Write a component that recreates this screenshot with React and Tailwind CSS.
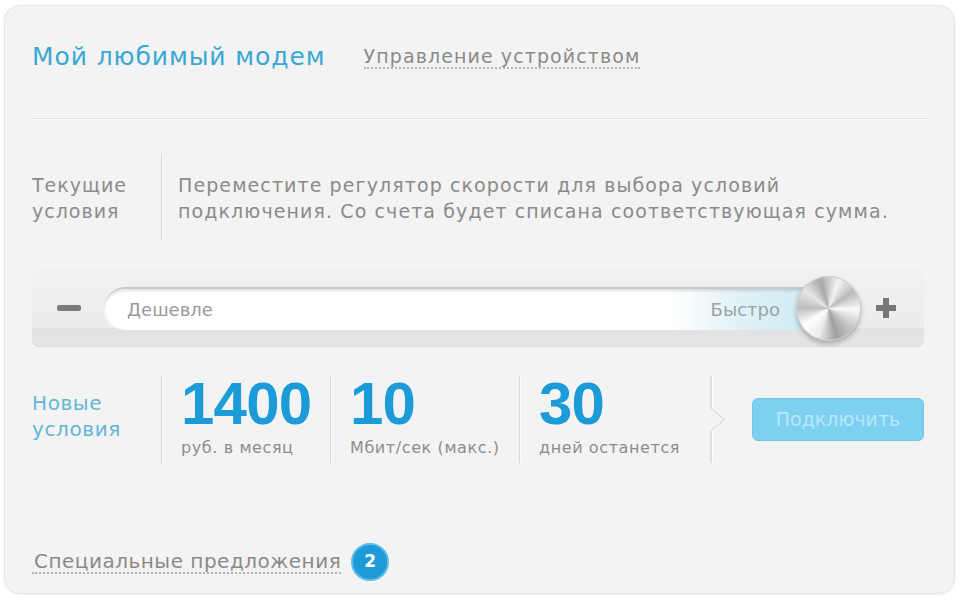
import React from 'react'

const verdana = "font-['DejaVu_Sans',Verdana,sans-serif]"
const tahoma = "font-['DejaVu_Sans',Tahoma,sans-serif]"

function Divider() {
  return <div className="h-full w-[2px] border-l border-[#d9d9d9] bg-[#fbfbfb]" />
}

function Stat({ value, label, width }) {
  return (
    <div className={`flex h-full items-stretch ${width}`}>
      <Divider />
      <div className="-mt-[2px] flex flex-col pl-[18px]">
        <span className="font-['Liberation_Sans',Arial,sans-serif] text-[60px] font-bold leading-[60px] tracking-[-0.8px] text-[#1b9bd7]">
          {value}
        </span>
        <span className={`${verdana} mt-[5px] text-[16px] leading-[18px] tracking-[0.6px] text-[#8d8d8d]`}>{label}</span>
      </div>
    </div>
  )
}

function Knob() {
  return (
    <div className="relative z-10 -ml-[34px] h-[65px] w-[65px] shrink-0 rounded-full bg-[#cfcfcf] p-[1px] shadow-[0_3px_5px_rgba(0,0,0,0.25)]">
      <div className="h-full w-full rounded-full bg-[conic-gradient(from_20deg,#f4f4f4,#b9b9b9,#fafafa,#c8c8c8,#9f9f9f,#ececec,#ffffff,#bdbdbd,#e6e6e6,#a9a9a9,#f4f4f4)]" />
    </div>
  )
}

function App() {
  return (
    <div className="h-[600px] w-[975px] overflow-hidden bg-white pl-[4px] pt-[5px]">
      <div className="flex h-[589px] w-[951px] flex-col rounded-[16px] border border-[#e4e4e4] bg-[#f3f3f3] pl-[27px] pr-[26px] shadow-[0_1px_3px_rgba(0,0,0,0.06)]">
        {/* header */}
        <div className="flex h-[102px] items-center gap-[38px]">
          <h1 className={`${tahoma} text-[25px] leading-[30px] tracking-[0.9px] text-[#3aa8d4]`}>Мой любимый модем</h1>
          <span className={`${tahoma} border-b-2 border-dotted border-[#b5b5b5] text-[19px] leading-[22px] tracking-[1.1px] text-[#8a8a8a]`}>
            Управление устройством
          </span>
        </div>
        <div className="mt-[10px] h-[2px] border-t border-[#e2e2e2] bg-white/70" />

        {/* current conditions */}
        <div className="mt-[34px] flex h-[87px] items-stretch">
          <div className={`${tahoma} flex w-[129px] items-center text-[19px] leading-[26px] tracking-[1px] text-[#8c8c8c]`}>
            Текущие
            <br />
            условия
          </div>
          <Divider />
          <p className={`${tahoma} flex items-center pl-[15px] text-[19px] leading-[26px] tracking-[1.1px] text-[#8a8a8a]`}>
            Переместите регулятор скорости для выбора условий
            <br />
            подключения. Со счета будет списана соответствующая сумма.
          </p>
        </div>

        {/* slider */}
        <div className="mt-[28px] flex h-[78px] w-[892px] items-center rounded-[8px] bg-[linear-gradient(#f1f1f1_0%,#ececec_75%,#e2e2e2_76%,#e4e4e4_100%)] pl-[25px] pr-[18px] shadow-[inset_0_-1px_0_#dadada]">
          <div className="h-[6px] w-[24px] rounded-[2px] bg-[#7a7a7a]" />
          <div className="ml-[23px] flex h-[43px] w-[726px] items-center justify-between rounded-full border-t-2 border-[#c9c9c9] bg-[linear-gradient(90deg,#ffffff_0%,#ffffff_78%,#dff1f6_88%,#c9eaf3_100%)] pl-[23px] pr-[50px] shadow-[inset_0_2px_3px_rgba(0,0,0,0.12)]">
            <span className={`${verdana} text-[18px] text-[#9b9b9b]`}>Дешевле</span>
            <span className={`${verdana} text-[18px] text-[#9aa3a6]`}>Быстро</span>
          </div>
          <Knob />
          <div className="relative ml-[15px] h-[20px] w-[20px]">
            <div className="absolute left-0 top-[7px] h-[6px] w-[20px] bg-[#777]" />
            <div className="absolute left-[7px] top-0 h-[20px] w-[6px] bg-[#777]" />
          </div>
        </div>

        {/* new conditions */}
        <div className="mt-[29px] flex h-[87px] items-stretch">
          <div className={`${verdana} flex w-[129px] items-center pb-[8px] text-[20px] leading-[26px] tracking-[0.6px] text-[#63b6d3]`}>
            Новые
            <br />
            условия
          </div>
          <Stat value="1400" label="руб. в месяц" width="w-[169px]" />
          <Stat value="10" label="Мбит/сек (макс.)" width="w-[189px]" />
          <Stat value="30" label="дней останется" width="w-[191px]" />
          <svg width="20" height="87" viewBox="0 0 20 87" className="shrink-0">
            <path d="M1 0 V32 L15 43.5 L1 55 V87" fill="none" stroke="#d9d9d9" strokeWidth="1.5" />
            <path d="M2.5 0 V32 L16.5 43.5 L2.5 55 V87" fill="none" stroke="#ffffff" strokeWidth="1" />
          </svg>
          <div className="flex items-center pl-[22px]">
            <button className={`${verdana} h-[43px] w-[172px] rounded-[6px] border border-[#72c9ea] bg-[#7dd0f0] text-[19px] text-[#b9e8f9]`}>
              Подключить
            </button>
          </div>
        </div>

        {/* special offers */}
        <div className="mt-[79px] flex h-[40px] items-center">
          <span className={`${verdana} border-b-2 border-dotted border-[#b0b0b0] pl-[2px] text-[20px] leading-[22px] tracking-[0.5px] text-[#8a8a8a]`}>
            Специальные предложения
          </span>
          <span className={`${verdana} ml-[10px] flex h-[38px] w-[38px] items-center justify-center rounded-full border-2 border-[#5cbde6] bg-[#1c9bd8] text-[17px] font-bold text-white`}>
            2
          </span>
        </div>
      </div>
    </div>
  )
}

export default App
